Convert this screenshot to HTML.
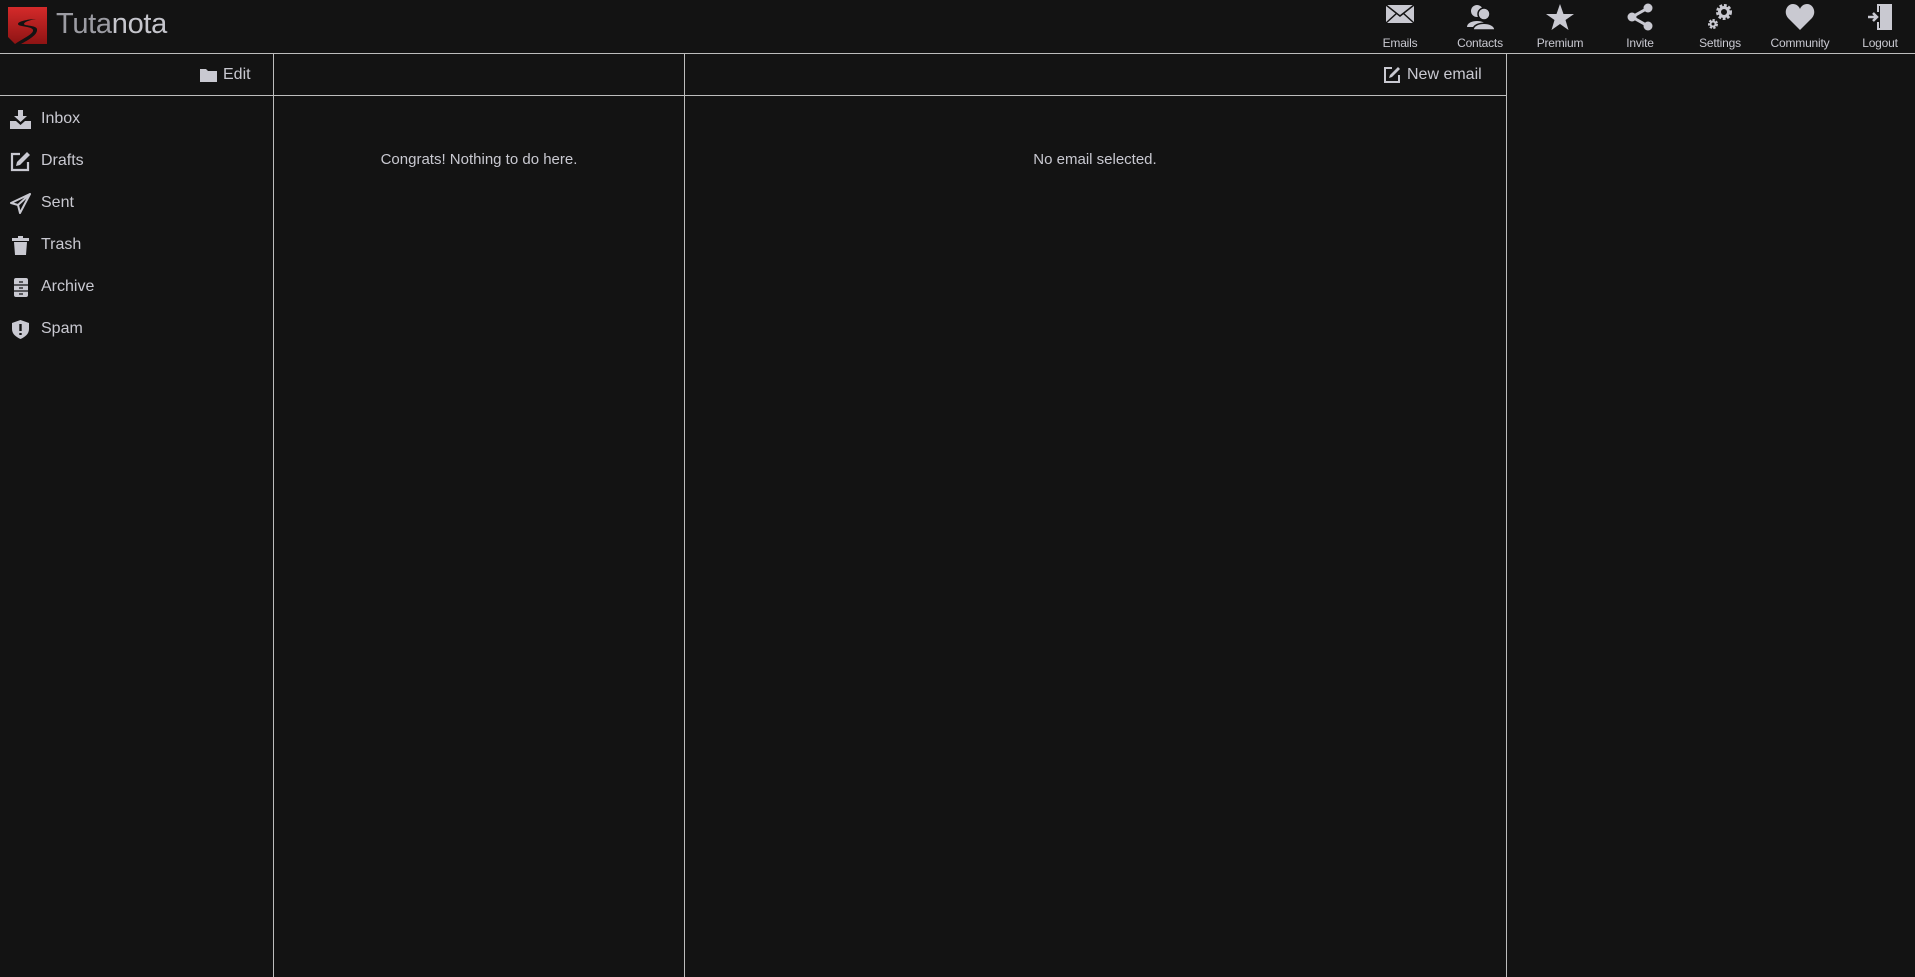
<!DOCTYPE html>
<html><head><meta charset="utf-8"><style>
*{margin:0;padding:0;box-sizing:border-box}
body{width:1915px;height:977px;background:#131313;font-family:"Liberation Sans",sans-serif;color:#c9c9d1;position:relative;overflow:hidden}
.hl{position:absolute;height:1px;background:#bdbdbd}
.vl{position:absolute;width:1px;background:#bdbdbd}
.nav{position:absolute;top:0;width:80px;text-align:center}
.nav svg{display:block;margin:3px auto 0}
.nav span{display:block;font-size:12px;margin-top:5px;letter-spacing:-0.2px}
.item{position:absolute;left:10px;font-size:16px;display:flex;align-items:center;height:24px}
.item svg{width:21px;height:21px;margin-right:10px}
.center{position:absolute;font-size:15px;transform:translateX(-50%);white-space:nowrap}
</style></head><body>
<svg style="position:absolute;left:8px;top:7px" width="39" height="37" viewBox="0 0 39 37">
<defs><linearGradient id="g" x1="0" y1="0" x2="0" y2="1"><stop offset="0" stop-color="#d42a2a"/><stop offset="1" stop-color="#8e1414"/></linearGradient></defs>
<path d="M0 0H39V37H7L0 30Z" fill="url(#g)"/>
<path d="M28 12C22 12 10 14 10 17C10 20 24 19 25 23C26 27 14 32 7 37H13C20 33 30 28 29 22C28 18 16 19 16 17C16 15 22 13 28 12Z" fill="#131313"/>
</svg>
<div style="position:absolute;left:56px;top:8px;font-size:29px;letter-spacing:-0.3px"><span style="color:#9c9ca3">Tuta</span><span style="color:#c5c5cc">nota</span></div>

<div class="nav" style="left:1360px"><svg width="30" height="22" viewBox="0 0 30 22"><rect x="1" y="2" width="28" height="18" fill="#c9c9d1"/><path d="M1 2L15 13L29 2M1 20L12 10M29 20L18 10" stroke="#131313" stroke-width="1.5" fill="none"/></svg><span style="margin-top:11px">Emails</span></div>
<div class="nav" style="left:1440px"><svg width="30" height="28" viewBox="0 0 30 28"><circle cx="12" cy="8" r="6" fill="#c9c9d1"/><path d="M2 24C2 16 22 16 22 24Z" fill="#c9c9d1"/><circle cx="19" cy="11" r="6" fill="#c9c9d1" stroke="#131313" stroke-width="1.5"/><path d="M8 27C8 18 30 18 30 27Z" fill="#c9c9d1" stroke="#131313" stroke-width="1.5"/></svg><span>Contacts</span></div>
<div class="nav" style="left:1520px"><svg width="30" height="28" viewBox="0 0 30 28"><path d="M15 1L18.5 11H29L20.5 17L23.5 27L15 21L6.5 27L9.5 17L1 11H11.5Z" fill="#c9c9d1"/></svg><span>Premium</span></div>
<div class="nav" style="left:1600px"><svg width="30" height="28" viewBox="0 0 30 28"><path d="M23 5L7 14L23 23" stroke="#c9c9d1" stroke-width="3" fill="none"/><circle cx="23" cy="5" r="4.5" fill="#c9c9d1"/><circle cx="7" cy="14" r="4.5" fill="#c9c9d1"/><circle cx="23" cy="23" r="4.5" fill="#c9c9d1"/></svg><span>Invite</span></div>
<div class="nav" style="left:1680px"><svg width="30" height="28" viewBox="0 0 30 28"><circle cx="19" cy="9" r="6" fill="none" stroke="#c9c9d1" stroke-width="4" stroke-dasharray="2.5 1.5"/><circle cx="19" cy="9" r="4.5" fill="none" stroke="#c9c9d1" stroke-width="3"/><circle cx="8" cy="21" r="3.5" fill="none" stroke="#c9c9d1" stroke-width="3" stroke-dasharray="2 1.2"/><circle cx="8" cy="21" r="2.5" fill="none" stroke="#c9c9d1" stroke-width="2"/></svg><span>Settings</span></div>
<div class="nav" style="left:1760px"><svg width="30" height="28" viewBox="0 0 30 28"><path d="M15 27L3 15C-2 9 2 1 8 1C11 1 14 3 15 6C16 3 19 1 22 1C28 1 32 9 27 15Z" fill="#c9c9d1"/></svg><span>Community</span></div>
<div class="nav" style="left:1840px"><svg width="30" height="28" viewBox="0 0 30 28"><path d="M12 1H27V27H12V19H14V25H25V3H14V9H12Z" fill="#c9c9d1"/><path d="M15 3L25 1V27L15 25Z" fill="#c9c9d1"/><path d="M3 14H11M8 10L12 14L8 18" stroke="#c9c9d1" stroke-width="2.5" fill="none"/></svg><span>Logout</span></div>

<div class="hl" style="left:0;top:53px;width:1915px"></div>
<div class="hl" style="left:0;top:95px;width:1506px"></div>
<div class="vl" style="left:273px;top:53px;height:924px"></div>
<div class="vl" style="left:684px;top:53px;height:924px"></div>
<div class="vl" style="left:1506px;top:53px;height:924px"></div>

<div style="position:absolute;left:199px;top:66px;font-size:16px;display:flex;align-items:center"><svg width="19" height="16" viewBox="0 0 19 16" style="margin-right:5px"><path d="M1 2H7L9 4H18V15H1Z" fill="#c9c9d1"/></svg>Edit</div>
<div style="position:absolute;left:1383px;top:66px;font-size:16px;display:flex;align-items:center"><svg width="18" height="18" viewBox="0 0 18 18" style="margin-right:6px"><path d="M9 2H2V16H16V9" stroke="#c9c9d1" stroke-width="2" fill="none"/><path d="M15 1L17 3L9 11L6 12L7 9Z" fill="#c9c9d1"/></svg>New email</div>

<div class="item" style="top:107px"><svg viewBox="0 0 21 21"><path d="M8 1H13V7H17L10.5 13L4 7H8Z" fill="#c9c9d1"/><path d="M0 12H6L10.5 16L15 12H21V20H0Z" fill="#c9c9d1"/></svg>Inbox</div>
<div class="item" style="top:149px"><svg viewBox="0 0 21 21"><path d="M10 3H2V19H18V11" stroke="#c9c9d1" stroke-width="2.2" fill="none"/><path d="M17 1L20 4L10 14L6 15L7 11Z" fill="#c9c9d1"/></svg>Drafts</div>
<div class="item" style="top:191px"><svg viewBox="0 0 21 21"><path d="M20 1L1 10L8 12L10 20Z" stroke="#c9c9d1" stroke-width="2" fill="none" stroke-linejoin="round"/><path d="M20 1L8 12" stroke="#c9c9d1" stroke-width="2"/></svg>Sent</div>
<div class="item" style="top:233px"><svg viewBox="0 0 21 21"><path d="M2 3H19V6H2Z M8 1H13V3H8Z M4 7H17L16 20H5Z" fill="#c9c9d1"/></svg>Trash</div>
<div class="item" style="top:275px"><svg viewBox="0 0 21 21"><rect x="4" y="1" width="14" height="19" rx="2" fill="#c9c9d1"/><path d="M4 8H18M4 14H18M9 5H13M9 11H13M9 17H13" stroke="#131313" stroke-width="1.3"/></svg>Archive</div>
<div class="item" style="top:317px"><svg viewBox="0 0 21 21"><path d="M10.5 1L19 4V10C19 15 15 18 10.5 20C6 18 2 15 2 10V4Z" fill="#c9c9d1"/><path d="M10.5 5V12M10.5 14V16" stroke="#131313" stroke-width="2.4"/></svg>Spam</div>

<div class="center" style="left:479px;top:151px">Congrats! Nothing to do here.</div>
<div class="center" style="left:1095px;top:151px">No email selected.</div>
</body></html>
